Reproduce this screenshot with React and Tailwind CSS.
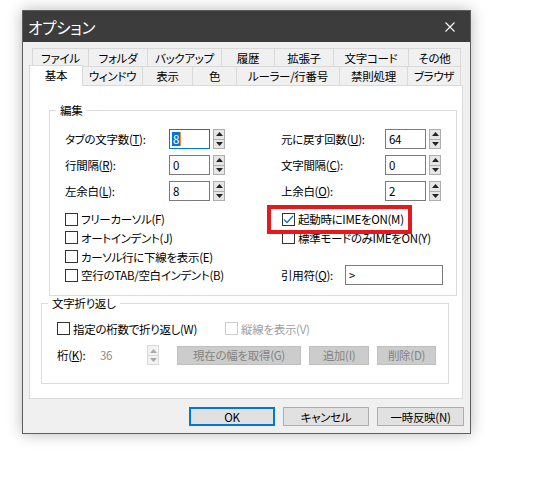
import React from "react";

function Spin({ disabled }) {
  const box = disabled
    ? "border-[#d9d9d9] bg-[#f3f3f3]"
    : "border-[#adadad] bg-[#e6e6e6]";
  const fill = disabled ? "#a8a8a8" : "#222222";
  return (
    <div className="ml-[3px] flex h-[20px] w-[12px] flex-col">
      <div className={`flex flex-1 items-center justify-center border ${box}`}>
        <svg width="7" height="4" viewBox="0 0 7 4">
          <path d="M0 4 L3.5 0 L7 4Z" fill={fill} />
        </svg>
      </div>
      <div className={`-mt-px flex flex-1 items-center justify-center border ${box}`}>
        <svg width="7" height="4" viewBox="0 0 7 4">
          <path d="M0 0 L7 0 L3.5 4Z" fill={fill} />
        </svg>
      </div>
    </div>
  );
}

function Field({ value, focused }) {
  return (
    <div
      className={`flex h-[20px] w-[41px] items-center border bg-white pl-[2px] leading-[14px] ${
        focused ? "border-[#0078d7]" : "border-[#7a7a7a]"
      }`}
    >
      {focused ? (
        <>
          <span className="bg-[#0078d7] px-px text-white">{value}</span>
          <span className="h-[14px] w-px bg-[#e8963c]" />
        </>
      ) : (
        <span className="pl-px">{value}</span>
      )}
    </div>
  );
}

function NumRow({ label, k, value, focused }) {
  return (
    <div className="flex h-[20px] items-center">
      <span className="w-[104px] leading-[14px]">
        {label}(<span className="underline">{k}</span>):
      </span>
      <Field value={value} focused={focused} />
      <Spin />
    </div>
  );
}

function Check({ label, checked, disabled }) {
  return (
    <div className="flex h-[18.67px] items-center">
      <span
        className={`flex h-[13px] w-[13px] shrink-0 items-center justify-center border bg-white ${
          disabled ? "border-[#cccccc]" : "border-[#333333]"
        }`}
      >
        {checked && (
          <svg width="11" height="9" viewBox="0 0 11 9">
            <path d="M1 4.5 L4 7.5 L10 1" stroke="#1c6fd1" strokeWidth="1.3" fill="none" />
          </svg>
        )}
      </span>
      <span className={`ml-[3px] whitespace-nowrap leading-[14px] ${disabled ? "text-[#a0a0a0]" : "text-black"}`}>
        {label}
      </span>
    </div>
  );
}

function GroupHeader({ title }) {
  return (
    <div className="flex h-[14px]">
      <div className="mt-[7px] w-[7px] border-l border-t border-[#dcdcdc]" />
      <span className="px-[4px] leading-[14px]">{title}</span>
      <div className="mt-[7px] flex-1 border-r border-t border-[#dcdcdc]" />
    </div>
  );
}

function Tab({ label, w, cls }) {
  return (
    <div
      className={`flex items-center justify-center border-t border-[#d9d9d9] bg-[#f0f0f0] leading-[14px] ${cls}`}
      style={{ width: w }}
    >
      {label}
    </div>
  );
}

function GrayBtn({ label, w }) {
  return (
    <div
      className="flex h-[19px] items-center justify-center border border-[#bfbfbf] bg-[#cccccc] leading-[14px] text-[#838383]"
      style={{ width: w }}
    >
      {label}
    </div>
  );
}

function Btn({ label, w, def }) {
  return (
    <div
      className={`flex h-[19px] items-center justify-center bg-[#e1e1e1] leading-[14px] ${
        def ? "border-2 border-[#0078d7]" : "border border-[#adadad]"
      }`}
      style={{ width: w }}
    >
      {label}
    </div>
  );
}

export default function App() {
  const row1 = [
    ["ファイル", 56, "border-l"],
    ["フォルダ", 59, "border-l"],
    ["バックアップ", 74, "border-l"],
    ["履歴", 53, "border-l"],
    ["拡張子", 59, "border-l"],
    ["文字コード", 75, "border-l"],
    ["その他", 53, "border-l border-r"],
  ];
  const row2 = [
    ["ウィンドウ", 59, ""],
    ["表示", 50, "border-l"],
    ["色", 44, "border-l"],
    ["ルーラー/行番号", 103, "border-l"],
    ["禁則処理", 68, "border-l"],
    ["ブラウザ", 54, "border-l border-r"],
  ];
  return (
    <div className="min-h-[485px] bg-white pl-[22px] pt-[10px] text-[11.5px] tracking-[-0.3px] text-black [font-family:'Noto_Sans_CJK_JP',sans-serif] [font-feature-settings:'palt']">
      <div className="flex h-[424px] w-[449px] flex-col border border-[#5e5e5e] bg-[#f0f0f0] shadow-[0_0_14px_rgba(0,0,0,0.28)]">
        {/* title bar */}
        <div className="flex h-[31px] items-center justify-between bg-[#3c3c3c] pl-[5px] pr-[15px]">
          <span className="text-[15.5px] leading-[20px] tracking-[-0.2px] text-white">オプション</span>
          <svg width="10" height="10" viewBox="0 0 10 10">
            <path d="M0.5 0.5 L9.5 9.5 M9.5 0.5 L0.5 9.5" stroke="#ffffff" strokeWidth="1.1" />
          </svg>
        </div>

        <div className="flex flex-1 flex-col pl-[6px] pr-[7px] pt-[6px]">
          {/* tabs */}
          <div className="flex h-[18px] pl-[3px]">
            {row1.map(([l, w, c]) => (
              <Tab key={l} label={l} w={w} cls={c} />
            ))}
          </div>
          <div className="flex h-[19px]">
            <div className="relative z-10 -mt-px flex h-[21px] w-[54px] items-start justify-center border-x border-t border-[#d9d9d9] bg-white pt-[2px] leading-[14px]">
              基本
            </div>
            {row2.map(([l, w, c]) => (
              <Tab key={l} label={l} w={w} cls={`h-[19px] ${c}`} />
            ))}
          </div>

          {/* panel */}
          <div className="flex h-[314px] w-[434px] flex-col border border-[#d9d9d9] bg-white">
            {/* 編集 group */}
            <div className="ml-[19px] mt-[17px] w-[408px]">
              <GroupHeader title="編集" />
              <div className="grid grid-cols-[216px_1fr] border-x border-b border-[#dcdcdc] pb-[10px] pl-[15px] pt-[12px]">
                <div className="flex flex-col">
                  <div className="flex flex-col gap-[6px]">
                    <NumRow label="タブの文字数" k="T" value="8" focused />
                    <NumRow label="行間隔" k="R" value="0" />
                    <NumRow label="左余白" k="L" value="8" />
                  </div>
                  <div className="mt-[9px] flex flex-col">
                    <Check label="フリーカーソル(F)" />
                    <Check label="オートインデント(J)" />
                    <Check label="カーソル行に下線を表示(E)" />
                    <Check label="空行のTAB/空白インデント(B)" />
                  </div>
                </div>
                <div className="flex flex-col">
                  <div className="flex flex-col gap-[6px]">
                    <NumRow label="元に戻す回数" k="U" value="64" />
                    <NumRow label="文字間隔" k="C" value="0" />
                    <NumRow label="上余白" k="O" value="2" />
                  </div>
                  <div className="mt-[9px] flex flex-col pl-px">
                    <div className="relative">
                      <Check label="起動時にIMEをON(M)" checked />
                      <div className="absolute left-[-15px] top-[-5px] z-10 h-[29px] w-[145px] border-4 border-[#e3191d]" />
                    </div>
                    <Check label="標準モードのみIMEをON(Y)" />
                  </div>
                  <div className="mt-[17.67px] flex h-[20px] items-center">
                    <span className="w-[64px] leading-[14px]">
                      引用符(<span className="underline">Q</span>):
                    </span>
                    <div className="flex h-[20px] w-[98px] items-center border border-[#7a7a7a] bg-white pl-[3px] leading-[14px]">
                      &gt;
                    </div>
                  </div>
                </div>
              </div>
            </div>

            {/* 文字折り返し group */}
            <div className="ml-[11px] w-[408px]">
              <GroupHeader title="文字折り返し" />
              <div className="border-x border-b border-[#dcdcdc] pb-[18px] pl-[15px] pt-[10px]">
                <div className="flex h-[18px] items-center">
                  <div className="w-[168px]">
                    <Check label="指定の桁数で折り返し(W)" />
                  </div>
                  <Check label="縦線を表示(V)" disabled />
                </div>
                <div className="mt-[8px] flex h-[19px] items-center">
                  <span className="w-[40px] leading-[14px]">
                    桁(<span className="underline">K</span>):
                  </span>
                  <span className="w-[47px] pl-[3px] leading-[14px] text-[#8a8a8a]">36</span>
                  <Spin disabled />
                  <div className="ml-[18px] flex gap-[8px]">
                    <GrayBtn label="現在の幅を取得(G)" w={124} />
                    <GrayBtn label="追加(I)" w={60} />
                    <GrayBtn label="削除(D)" w={59} />
                  </div>
                </div>
              </div>
            </div>
          </div>

          {/* bottom buttons */}
          <div className="mr-[-1px] mt-[8px] flex justify-end gap-[8px]">
            <Btn label="OK" w={86} def />
            <Btn label="キャンセル" w={86} />
            <Btn label="一時反映(N)" w={87} />
          </div>
        </div>
      </div>
    </div>
  );
}
